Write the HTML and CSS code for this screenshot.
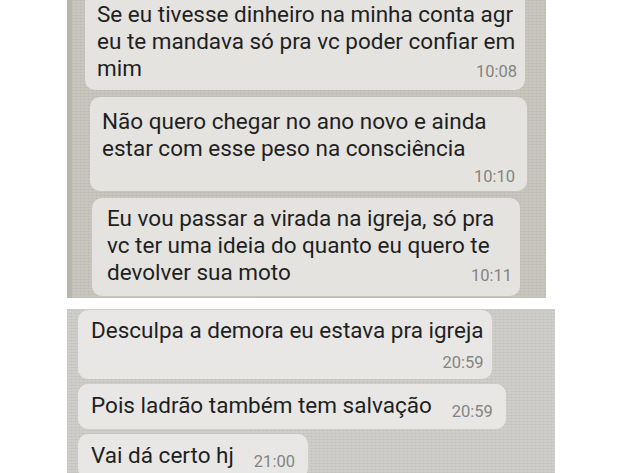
FILE: index.html
```html
<!DOCTYPE html>
<html lang="pt-BR">
<head>
  <meta charset="UTF-8">
  <meta name="viewport" content="width=device-width, initial-scale=1.0">
  <title>Conversa</title>
  <link rel="stylesheet" href="styles.css">
</head>
<body>
  <div class="page">
    <!-- primeiro print -->
    <div class="shot shot-top">
      <div class="bubble bubble-a">
        <p class="text">Se eu tivesse dinheiro na minha conta agr<br>eu te mandava só pra vc poder confiar em<br>mim<span class="time">10:08</span></p>
      </div>
      <div class="bubble bubble-b">
        <p class="text">Não quero chegar no ano novo e ainda<br>estar com esse peso na consciência</p>
        <span class="time time-row">10:10</span>
      </div>
      <div class="bubble bubble-c">
        <p class="text">Eu vou passar a virada na igreja, só pra<br>vc ter uma ideia do quanto eu quero te<br>devolver sua moto<span class="time">10:11</span></p>
      </div>
    </div>

    <!-- segundo print -->
    <div class="shot shot-bottom">
      <div class="bubble bubble-d">
        <p class="text">Desculpa a demora eu estava pra igreja</p>
        <span class="time time-row">20:59</span>
      </div>
      <div class="bubble bubble-e">
        <p class="text">Pois ladrão também tem salvação<span class="time inline">20:59</span></p>
      </div>
      <div class="bubble bubble-f">
        <p class="text">Vai dá certo hj<span class="time inline">21:00</span></p>
      </div>
    </div>
  </div>
</body>
</html>
```

FILE: styles.css
```css
body {
  margin: 0;
  background: #fff;
  font-family: Roboto, "Noto Sans", Arial, sans-serif;
  color: #1f1f1f;
  overflow: hidden;
}

.page {
  padding-left: 67px;
  display: flex;
  flex-direction: column;
  gap: 11px;
}

/* fundo das fotos */
.shot {
  display: flex;
  flex-direction: column;
  overflow: hidden;
  background-image:
    repeating-linear-gradient(0deg, rgba(0,0,0,0.035) 0 1px, transparent 1px 3px),
    repeating-linear-gradient(90deg, rgba(0,0,0,0.025) 0 1px, transparent 1px 4px);
}

.shot-top {
  width: 479px;
  height: 298px;
  gap: 7px;
  background-color: #c9c6be;
  border-left: 5px solid #b7b4ab;
  box-sizing: border-box;
}

.shot-bottom {
  width: 488px;
  height: 200px;
  gap: 5px;
  background-color: #d0cecb;
}

.bubble {
  background: #e4e3df;
  border-radius: 10px;
  box-sizing: border-box;
}

.text {
  margin: 0;
  font-size: 22.5px;
  line-height: 27px;
}

.time {
  font-size: 16.5px;
  color: #858481;
}

.text .time {
  float: right;
  margin-top: 3px;
}

.time-row {
  display: block;
  text-align: right;
  line-height: 20px;
}

.text .time.inline {
  float: none;
  margin: 0 0 0 20px;
  line-height: 1;
  vertical-align: -4px;
}

.bubble-a {
  width: 440px;
  margin: -8px 0 0 13px;
  padding: 9px 8px 5px 12px;
}

.bubble-b {
  width: 437px;
  margin-left: 18px;
  padding: 11px 12px 4px 12px;
}

.bubble-b .time-row {
  margin-top: 5px;
}

.bubble-c {
  width: 428px;
  margin-left: 20px;
  padding: 7px 8px 7px 15px;
}

.shot-bottom .bubble {
  align-self: flex-start;
  margin-left: 11px;
  background: #e8e7e5;
  padding: 7px 13px 6px 13px;
}

.bubble-d {
  margin-top: 1px;
  padding-right: 8px !important;
}

.bubble-d .time-row {
  margin-top: 9px;
}

.bubble-e,
.bubble-f {
  padding-top: 8px !important;
  padding-bottom: 8px !important;
}
```
